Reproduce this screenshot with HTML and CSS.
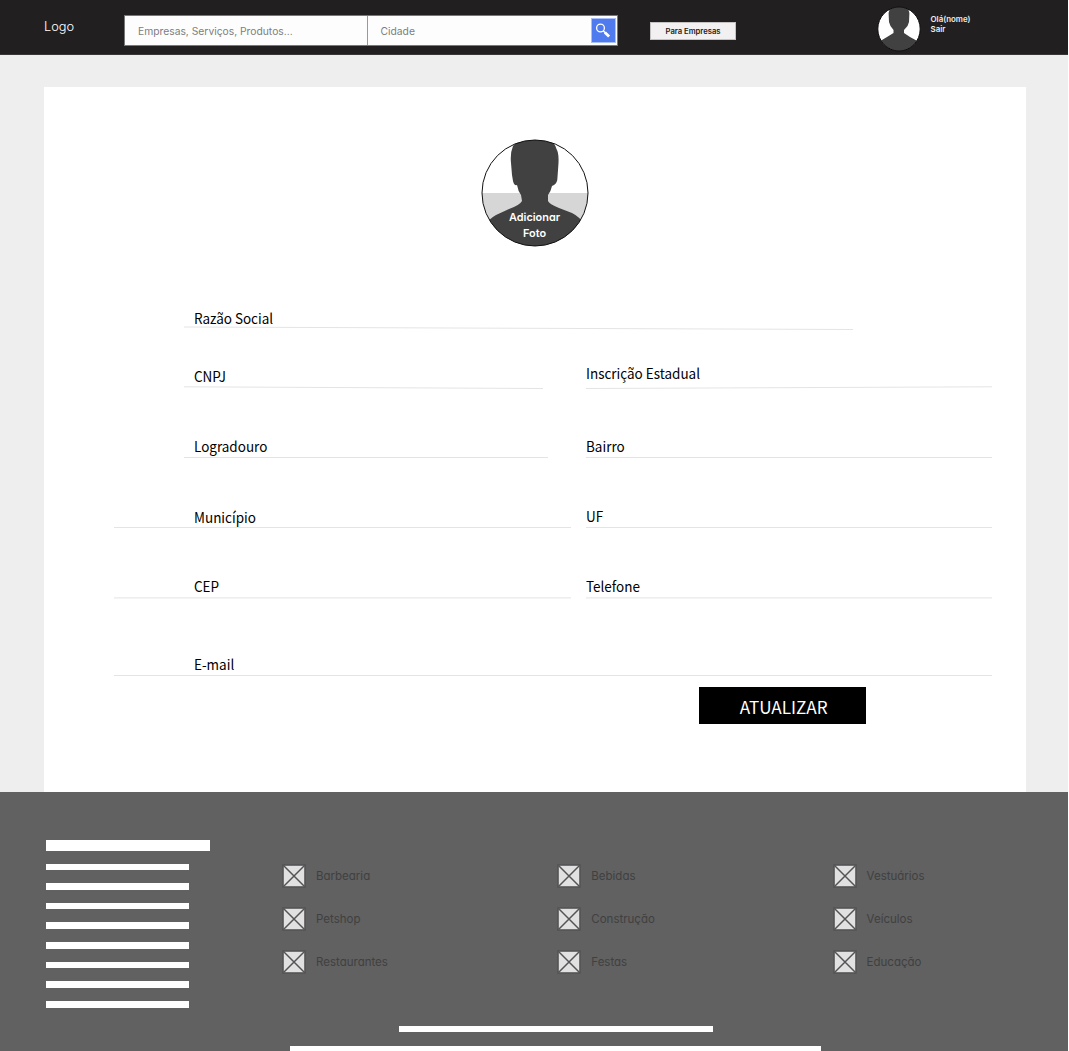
FILE: index.html
```
<!DOCTYPE html>
<html lang="pt-BR">
<head>
<meta charset="utf-8">
<title>Atualizar cadastro</title>
<link rel="stylesheet" href="styles.css">
</head>
<body>
<svg class="defs" width="0" height="0">
  <symbol id="box" viewBox="0 0 24 24">
    <rect x="1" y="1" width="22" height="22" fill="#e1e1e1" stroke="#545456" stroke-width="1.6"/>
    <path d="M1.5 1.5 22.5 22.5M22.5 1.5 1.5 22.5" stroke="#545456" stroke-width="1.5"/>
  </symbol>
</svg>
<div class="page">
  <header class="topbar">
    <a class="logo">Logo</a>
    <form class="search">
      <span class="search-what">Empresas, Serviços, Produtos...</span>
      <span class="search-city">Cidade</span>
      <span class="search-btn">
        <svg width="24" height="24" viewBox="0 0 24 24" fill="none" stroke="#fff"><circle cx="9.5" cy="10" r="3.9" stroke-width="1.3"/><path d="M12.3 12.8l2.2 2.2" stroke-width="1.5"/><path d="M13.9 14.4l4.2 4.2" stroke-width="2.8"/></svg>
      </span>
    </form>
    <a class="business">Para Empresas</a>
    <div class="user">
      <svg class="user-pic" width="44" height="46" viewBox="0 0 44 46">
        <clipPath id="c1"><ellipse cx="22" cy="23" rx="21.2" ry="22"/></clipPath>
        <ellipse cx="22" cy="23" rx="21.2" ry="22" fill="#fff"/>
        <path clip-path="url(#c1)" d="M13 2Q22-1 31 2L32.4 7 32 16 30.5 20 27 24 27 27 33 31 44 37V46H0V37L10 31 16.5 27 16.5 24 13.5 20 12 16 11.6 7Z" fill="#414141"/>
        <ellipse cx="22" cy="23" rx="21.2" ry="22" fill="none" stroke="#0c0c0c" stroke-width="1"/>
      </svg>
      <div class="user-text">Olá(nome)<br>Sair</div>
    </div>
  </header>

  <main class="card">
    <div class="photo">
      <svg width="108" height="108" viewBox="0 0 108 108">
        <clipPath id="c2"><circle cx="54" cy="54" r="53"/></clipPath>
        <circle cx="54" cy="54" r="53" fill="#fff"/>
        <g clip-path="url(#c2)">
          <rect y="54" width="108" height="54" fill="#d6d6d6"/>
          <path d="M37 1Q53-3 69 2Q74 4 75.5 10Q78 14 77.5 24L76.5 38Q76.5 44 73 46L71 47Q70 52 67 56L67 62Q68 65 78 69L91 74Q99 78 104 86V108H4V86Q8 80 15 76L28 70Q39 66 41 62L40 56Q37 52 36 46Q33 47 32 42L31 36L30 24Q29 14 32 7Z" fill="#414141"/>
        </g>
        <circle cx="54" cy="54" r="53" fill="none" stroke="#111" stroke-width="1"/>
      </svg>
      <span class="photo-text">Adicionar<br>Foto</span>
    </div>

    <form class="fields">
      <div class="field wide r1"><label>Razão Social</label><svg viewBox="0 0 878 4"><path d="M70 1 739 3.5"/></svg></div>
      <div class="field r2"><label>CNPJ</label><svg viewBox="0 0 457 4"><path d="M70 1.8 429 3.5"/></svg></div>
      <div class="field r2 right high"><label>Inscrição Estadual</label><svg viewBox="0 0 406 4"><path d="M0 3.5 406 1.8"/></svg></div>
      <div class="field r3"><label>Logradouro</label><svg viewBox="0 0 457 4"><path d="M70 1.5H434"/></svg></div>
      <div class="field r3 right"><label>Bairro</label><svg viewBox="0 0 406 4"><path d="M0 1.5H406"/></svg></div>
      <div class="field r4"><label>Município</label><svg viewBox="0 0 457 4"><path d="M0 1.5H457"/></svg></div>
      <div class="field r4 right"><label>UF</label><svg viewBox="0 0 406 4"><path d="M0 1.5H406"/></svg></div>
      <div class="field r5"><label>CEP</label><svg viewBox="0 0 457 4"><path d="M0 1.9H457"/></svg></div>
      <div class="field r5 right"><label>Telefone</label><svg viewBox="0 0 406 4"><path d="M0 1.9H406"/></svg></div>
      <div class="field wide r6"><label>E-mail</label><svg viewBox="0 0 878 4"><path d="M0 1.5H878"/></svg></div>
    </form>
    <button class="submit"><span>ATUALIZAR</span></button>
  </main>

  <footer class="footer">
    <div class="footer-top">
      <div class="lines"><b></b><i></i><i></i><i></i><i></i><i></i><i></i><i></i><i></i></div>
      <div class="cats">
        <div class="cat"><svg><use href="#box"/></svg>Barbearia</div>
        <div class="cat"><svg><use href="#box"/></svg>Bebidas</div>
        <div class="cat"><svg><use href="#box"/></svg>Vestuários</div>
        <div class="cat"><svg><use href="#box"/></svg>Petshop</div>
        <div class="cat"><svg><use href="#box"/></svg>Construção</div>
        <div class="cat"><svg><use href="#box"/></svg>Veículos</div>
        <div class="cat"><svg><use href="#box"/></svg>Restaurantes</div>
        <div class="cat"><svg><use href="#box"/></svg>Festas</div>
        <div class="cat"><svg><use href="#box"/></svg>Educação</div>
      </div>
    </div>
    <div class="bar-short"></div>
    <div class="bar-long"></div>
  </footer>
</div>
</body>
</html>
```
FILE: styles.css
```
* { box-sizing: border-box; }
body { margin: 0; background: #fff; font-family: Inter, sans-serif; overflow: hidden; }
.defs { display: block; height: 0; }
.page { width: 1068px; height: 1051px; background: #eee; display: flex; flex-direction: column; overflow: hidden; }

.topbar { height: 55px; flex: none; background: #221f20; border-bottom: 1px solid #383637; display: flex; align-items: flex-start; }
.logo { width: 80px; margin-left: 44px; padding-top: 18px; font-size: 12.8px; font-weight: 300; line-height: 18px; color: #fff; }
.search { width: 494px; height: 31px; margin-top: 15px; background: #fdfdfd; display: flex; font-size: 10.3px; line-height: 31px; color: #7d7d7f; border: 1px solid #777; }
.search-what { width: 242.5px; height: 29px; padding-left: 13px; border-right: 1.5px solid #999; }
.search-city { width: 223px; height: 29px; padding-left: 13px; }
.search-btn { width: 25px; height: 25px; margin-top: 2px; background: #4f7bef; border: 1px solid #a9c0ff; display: flex; }
.search-btn svg { display: block; flex: none; margin: -1px; }
.business { width: 86px; height: 18px; margin: 22px 0 0 32px; background: #f2f0f1; border: 1px solid #c4c2c3; color: #1c1a1b; font-weight: 600; font-size: 7.65px; line-height: 17px; text-align: center; }
.user { display: flex; margin: 6px 0 0 141px; }
.user-pic { display: block; }
.user-text { margin: 8px 0 0 9.5px; color: #eee; font-weight: 600; font-size: 7.9px; line-height: 10px; }

.card { width: 982px; height: 705px; flex: none; margin: 32px 0 0 44px; background: #fff; padding: 52px 34px 0 70px; display: flex; flex-direction: column; }
.photo { position: relative; width: 108px; height: 108px; margin-left: 366.5px; }
.photo svg { display: block; }
.photo-text { position: absolute; left: 0; right: 0; top: 69.5px; text-align: center; color: #fff; font-weight: 600; font-size: 10.9px; line-height: 16px; font-feature-settings: "cv11"; }

.fields { display: grid; grid-template-columns: 457px 406px; column-gap: 15px; margin: 61px 0 0; }
.field { display: flex; flex-direction: column; justify-content: space-between; }
.wide { grid-column: 1 / 3; }
.field label { display: block; margin-left: 80px; width: 130px; font-family: "Noto Sans CJK SC", sans-serif; font-size: 14.2px; line-height: 16px; color: #000; transform: scaleX(.95); transform-origin: left; }
.field.right label { margin-left: -0.5px; }
.field svg { display: block; height: 4px; width: 100%; fill: none; stroke: #e4e4e4; stroke-width: 1; }
.r1 { height: 22px; padding-top: 2px; }
.r1 svg { flex: none; }
.r2 { height: 59px; padding-top: 37.6px; }
.r2.high { padding-top: 35px; }
.r3 { height: 71px; padding-top: 49px; }
.r4 { height: 70px; padding-top: 48.5px; }
.r4.right { padding-top: 47.5px; }
.r5 { height: 70px; padding-top: 48px; }
.r6 { height: 78px; padding-top: 56px; }

.submit { width: 167px; height: 37px; margin: 9px 0 0 585px; padding: 1px 0 0 3px; border: 0; background: #000; color: #fff; font-family: "Noto Sans CJK SC", sans-serif; font-size: 17.4px; line-height: 33px; }
.submit span { display: inline-block; transform: scaleX(.985); }

.footer { flex: 1; background: #616161; padding: 47.5px 0 0; }
.footer-top { display: flex; height: 186px; }
.lines { width: 282px; flex: none; padding-left: 46px; }
.lines b { display: block; width: 164.4px; height: 11px; margin-bottom: 13px; background: #fff; }
.lines i { display: block; width: 143px; height: 6.67px; margin-bottom: 13px; background: #fff; }
.cats { display: grid; flex: none; width: 785px; grid-template-columns: repeat(3, 275.3px); grid-auto-rows: 43px; padding-top: 24.5px; }
.cat { display: flex; height: 24px; align-items: center; gap: 10px; font-size: 11.5px; font-feature-settings: "cv11"; color: #404040; }
.cat svg { width: 24px; height: 24px; flex: none; }
.bar-short { width: 314px; height: 6px; margin-left: 399px; background: #fff; }
.bar-long { width: 531px; height: 10px; margin: 14px 0 0 290px; background: #fff; }
```
